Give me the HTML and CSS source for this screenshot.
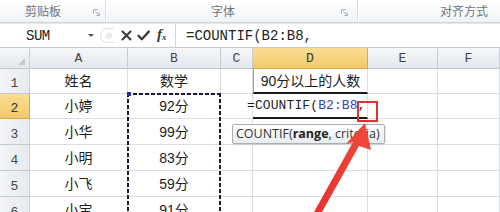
FILE: index.html
```html
<!DOCTYPE html>
<html lang="zh-CN">
<head>
<meta charset="utf-8">
<title>Excel COUNTIF</title>
<link rel="stylesheet" href="styles.css">
</head>
<body>
<div class="page">
  <div class="ribbon">
    <div class="group g1"><span class="glabel">剪贴板</span><svg class="launcher" width="7" height="7" viewBox="0 0 7 7"><path d="M0.5 5V0.5H5" fill="none" stroke="#a9b0b8"/><path d="M2 2L6.5 6.5M6.5 3.5V6.5H3.5" fill="none" stroke="#a9b0b8"/></svg></div>
    <div class="group g2"><span class="glabel">字体</span><svg class="launcher" width="7" height="7" viewBox="0 0 7 7"><path d="M0.5 5V0.5H5" fill="none" stroke="#a9b0b8"/><path d="M2 2L6.5 6.5M6.5 3.5V6.5H3.5" fill="none" stroke="#a9b0b8"/></svg></div>
    <div class="group g3"><span class="glabel">对齐方式</span></div>
  </div>
  <div class="fbar">
    <div class="namebox"><span class="name">SUM</span><span class="dd"></span></div>
    <div class="grip"></div>
    <div class="fbtns">
      <svg class="ic" width="11" height="11" viewBox="0 0 11 11"><path d="M1.5 1.5L9.5 9.5M9.5 1.5L1.5 9.5" stroke="#3a3a3a" stroke-width="2.1" stroke-linecap="round"/></svg>
      <svg class="ic" width="13" height="11" viewBox="0 0 13 11"><path d="M1.5 5.8L4.8 9.2L11.8 1.6" fill="none" stroke="#3a3a3a" stroke-width="2.3" stroke-linecap="round" stroke-linejoin="round"/></svg>
      <span class="fx">f<sub>x</sub></span>
    </div>
    <div class="finput">=COUNTIF(B2:B8,</div>
  </div>
  <div class="sheet">
    <div class="hd corner"><span class="tri"></span></div>
    <div class="hd col">A</div>
    <div class="hd col">B</div>
    <div class="hd col">C</div>
    <div class="hd col sel">D</div>
    <div class="hd col">E</div>
    <div class="hd col">F</div>

    <div class="hd row">1</div>
    <div class="cell">姓名</div>
    <div class="cell">数学</div>
    <div class="cell"></div>
    <div class="cell title">90分以上的人数</div>
    <div class="cell"></div>
    <div class="cell"></div>

    <div class="hd row sel">2</div>
    <div class="cell">小婷</div>
    <div class="cell copy">92分<span class="ants"><span class="anchor"></span></span></div>
    <div class="cell"></div>
    <div class="cell edit"><span class="ed">=COUNTIF(<span class="ref">B2:B8</span>,</span></div>
    <div class="cell"></div>
    <div class="cell"></div>

    <div class="hd row">3</div>
    <div class="cell">小华</div>
    <div class="cell">99分</div>
    <div class="cell"></div>
    <div class="cell"></div>
    <div class="cell"></div>
    <div class="cell"></div>

    <div class="hd row">4</div>
    <div class="cell">小明</div>
    <div class="cell">83分</div>
    <div class="cell"></div>
    <div class="cell"></div>
    <div class="cell"></div>
    <div class="cell"></div>

    <div class="hd row">5</div>
    <div class="cell">小飞</div>
    <div class="cell">59分</div>
    <div class="cell"></div>
    <div class="cell"></div>
    <div class="cell"></div>
    <div class="cell"></div>

    <div class="hd row">6</div>
    <div class="cell">小宝</div>
    <div class="cell">91分</div>
    <div class="cell"></div>
    <div class="cell"></div>
    <div class="cell"></div>
    <div class="cell"></div>
  </div>

  <div class="tooltip">COUNTIF(<b>range</b>, criteria)</div>
  <div class="redbox"></div>
  <svg class="arrow" width="500" height="212" viewBox="0 0 500 212">
    <defs>
      <linearGradient id="ag" x1="0" y1="0" x2="1" y2="0">
        <stop offset="0" stop-color="#e6302c"/>
        <stop offset="1" stop-color="#f04a3c"/>
      </linearGradient>
    </defs>
    <polygon points="365,123 346,144 353,142 314,212 322,212 359,146 371,150" fill="url(#ag)"/>
  </svg>
</div>
</body>
</html>
```
FILE: styles.css
```css
* { box-sizing: border-box; }
html, body { margin: 0; padding: 0; }
body { background: #fff; font-family: "Liberation Sans", "Noto Sans CJK SC", sans-serif; }
.page { position: relative; width: 500px; height: 212px; overflow: hidden; background: #fff; }

.ribbon { display: flex; height: 23px; background: linear-gradient(#ffffff, #f1f3f6); border-bottom: 1px solid #cfd4db; }
.group { display: flex; align-items: center; height: 22px; border-right: 1px solid #d9dde2; box-shadow: 1px 0 0 #fff; }
.glabel { font-family: "Noto Sans CJK SC", sans-serif; font-size: 12px; color: #6e747c; line-height: 14px; }
.launcher { margin-left: auto; margin-top: 2px; }
.g1 { width: 106px; padding-left: 25px; padding-right: 5px; }
.g2 { width: 252px; padding-left: 105px; padding-right: 9px; }
.g3 { flex: 1; padding-left: 82px; border-right: none; box-shadow: none; }

.fbar { display: flex; align-items: stretch; height: 25px; background: #fff; border-bottom: 1px solid #c7ccd3; border-top: 1px solid #e6e9ee; }
.namebox { display: flex; align-items: center; width: 98px; padding-left: 26px; }
.name { font-family: "Liberation Mono", monospace; font-size: 14px; color: #222; letter-spacing: -0.5px; }
.dd { margin-left: auto; margin-right: 4px; width: 0; height: 0; border-left: 3px solid transparent; border-right: 3px solid transparent; border-top: 3px solid #555; }
.grip { width: 14px; margin: 4px 0 4px 2px; border-radius: 50% 0 0 50%; border: 1px solid #dde1e6; border-right: none; background: radial-gradient(circle at 60% 50%, #e8ebef 0 3px, #fff 3.5px); }
.fbtns { display: flex; align-items: center; gap: 5px; padding-left: 7px; width: 62px; border-right: 1px solid #d2d6dc; }
.ic { display: block; }
.fx { font-family: "Liberation Serif", serif; font-style: italic; font-weight: bold; font-size: 15px; color: #3a3a3a; margin-left: 2px; line-height: 14px; }
.fx sub { font-size: 9px; vertical-align: -1px; }
.finput { flex: 1; display: flex; align-items: center; padding-left: 10px; font-family: "Liberation Mono", monospace; font-size: 14px; color: #222; }

.sheet { display: grid; grid-template-columns: 30px 98px 93px 32px 115px 70px 62px; grid-template-rows: 21px 25px 25px 26px 26px 26px 26px; }
.hd { background: linear-gradient(#f6f8fa, #e3e7ec); border-right: 1px solid #c9ced5; border-bottom: 1px solid #c3c9d0; color: #444; font-family: "Liberation Mono", monospace; font-size: 13px; display: flex; justify-content: center; align-items: flex-end; line-height: 14px; }
.hd.col { padding-bottom: 2px; }
.hd.row { background: linear-gradient(90deg, #f3f5f8, #e6e9ee); padding-bottom: 2px; }
.hd.sel { background: linear-gradient(#f9de92, #f2c96a); border-color: #d9a84a; color: #333; }
.corner { position: relative; }
.tri { position: absolute; right: 4px; bottom: 3px; width: 0; height: 0; border-left: 7px solid transparent; border-bottom: 7px solid #c4cad1; }

.cell { border-right: 1px solid #dadde1; border-bottom: 1px solid #dadde1; display: flex; justify-content: center; align-items: flex-end; padding-bottom: 3px; font-family: "Liberation Sans", "Noto Sans CJK SC", sans-serif; font-size: 14px; line-height: 18px; color: #1e1e1e; white-space: nowrap; }
.cell.title { border-left: 1px solid #9aa0a8; border-bottom: 2px solid #1a1a1a; padding-bottom: 2px; }
.cell.edit { justify-content: flex-start; border-bottom: 2px solid #1a1a1a; padding-bottom: 2px; overflow: visible; }
.ed { margin-left: -6px; font-family: "Liberation Mono", monospace; font-size: 13px; color: #1e1e1e; letter-spacing: 0.1px; }
.ref { color: #3d3fb8; }

.copy { position: relative; }
.ants { position: absolute; left: -1px; top: -1px; width: 94px; height: 170px; pointer-events: none;
  background:
    repeating-linear-gradient(90deg, #1c1c30 0 4px, transparent 4px 6px) top / 100% 2px no-repeat,
    repeating-linear-gradient(180deg, #1c1c30 0 4px, transparent 4px 6px) left / 2px 100% no-repeat,
    repeating-linear-gradient(180deg, #1c1c30 0 4px, transparent 4px 6px) right / 2px 100% no-repeat; }
.anchor { position: absolute; left: 0; top: -1px; width: 4px; height: 4px; background: #2a2a9a; }

.tooltip { position: absolute; left: 232px; top: 124px; width: 153px; height: 20px; border: 1px solid #a9aeb5; border-radius: 2px; background: linear-gradient(#ffffff, #e9ecf0); font-family: "Open Sans", "Liberation Sans", sans-serif; font-size: 12.5px; line-height: 18px; color: #333; padding-left: 3px; white-space: nowrap; overflow: hidden; box-shadow: 1px 1px 1px rgba(0,0,0,0.08); }
.tooltip b { font-weight: 700; color: #222; }
.redbox { position: absolute; left: 357px; top: 101px; width: 21px; height: 21px; border: 2px solid #e2302c; }
.arrow { position: absolute; left: 0; top: 0; pointer-events: none; }
```
